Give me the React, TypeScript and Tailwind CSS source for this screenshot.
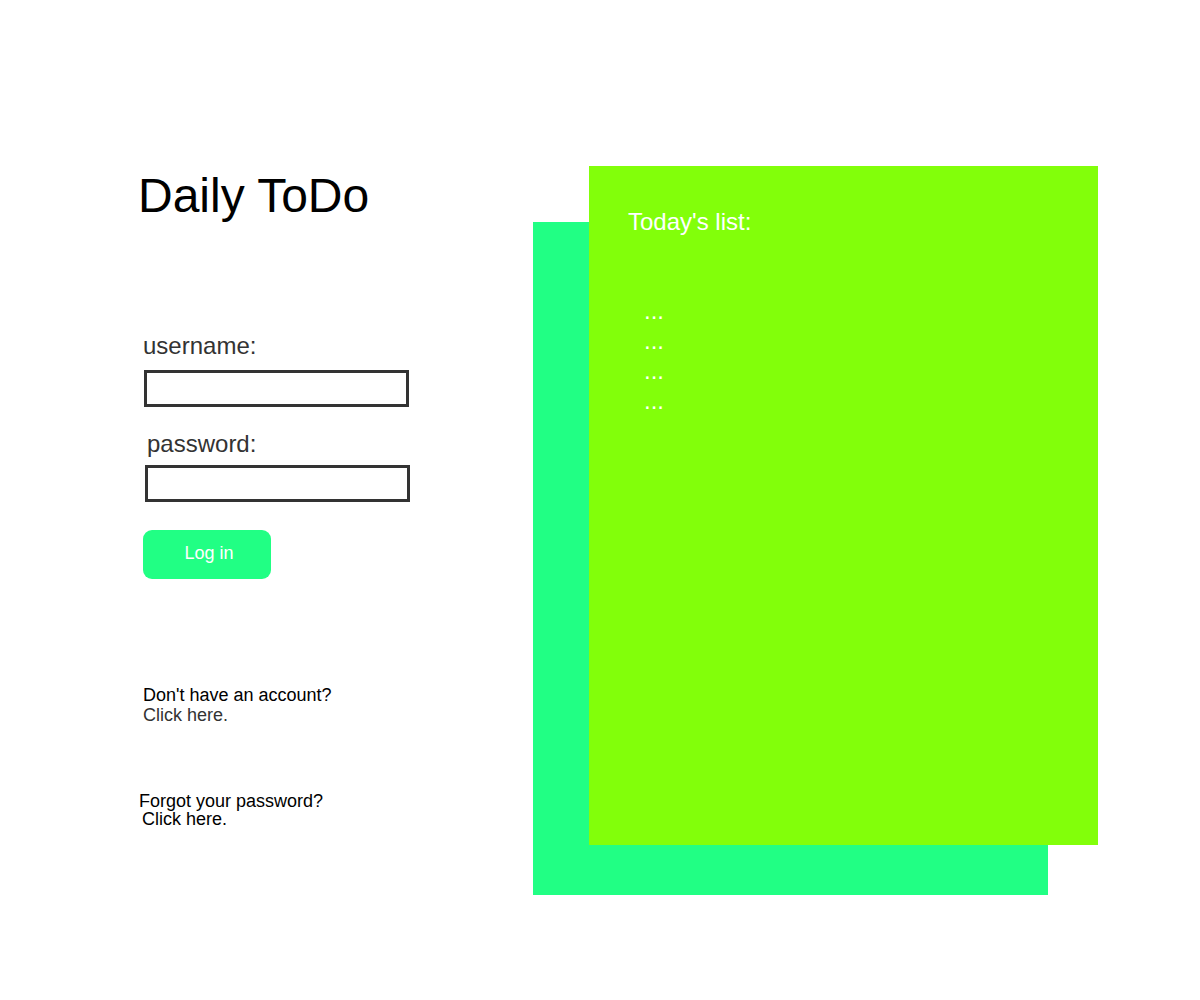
import React from "react";

export default function App() {
  return (
    <div
      className="flex min-h-[1000px] w-[1200px] bg-white"
      style={{ fontFamily: '"Liberation Sans", Arial, Helvetica, sans-serif' }}
    >
      <div className="flex w-[533px] shrink-0 flex-col items-start pl-[136px] pt-[173px]">
        <h1 className="ml-[2px] text-[48px] leading-[46px] text-black">Daily ToDo</h1>

        <label className="ml-[7px] mt-[115px] text-[24px] leading-[24px] text-[#333333]">username:</label>
        <input
          type="text"
          className="ml-[8px] mt-[12px] h-[37px] w-[265px] border-[3px] border-[#333333] bg-white outline-none"
        />

        <label className="ml-[11px] mt-[25px] text-[24px] leading-[24px] text-[#333333]">password:</label>
        <input
          type="password"
          className="ml-[9px] mt-[9px] h-[37px] w-[265px] border-[3px] border-[#333333] bg-white outline-none"
        />

        <button className="ml-[7px] mt-[28px] flex h-[49px] w-[128px] items-center justify-center rounded-[9px] bg-[#21ff84] pb-[3px] pl-[4px] text-[18px] leading-[20px] text-white">
          Log in
        </button>

        <div className="ml-[7px] mt-[106px] text-[18px] leading-[20px]">
          <div className="text-black">Don't have an account?</div>
          <div className="text-[#333333]">Click here.</div>
        </div>

        <div className="mt-[67px] text-[18px] leading-[18px] text-black">
          <div className="ml-[3px]">Forgot your password?</div>
          <div className="ml-[6px]">Click here.</div>
        </div>
      </div>

      <div className="pt-[222px]">
        <div className="flex h-[673px] w-[515px] items-start bg-[#21ff84]">
          <div className="-mt-[56px] ml-[56px] flex h-[679px] w-[509px] shrink-0 flex-col items-start bg-[#82ff0a] pl-[39px] pt-[44px] text-white">
            <div className="text-[24px] leading-[24px]">Today's list:</div>
            <div className="ml-[16px] mt-[62px] flex flex-col text-[24px] leading-[30px]">
              <div>...</div>
              <div>...</div>
              <div>...</div>
              <div>...</div>
            </div>
          </div>
        </div>
      </div>
    </div>
  );
}
